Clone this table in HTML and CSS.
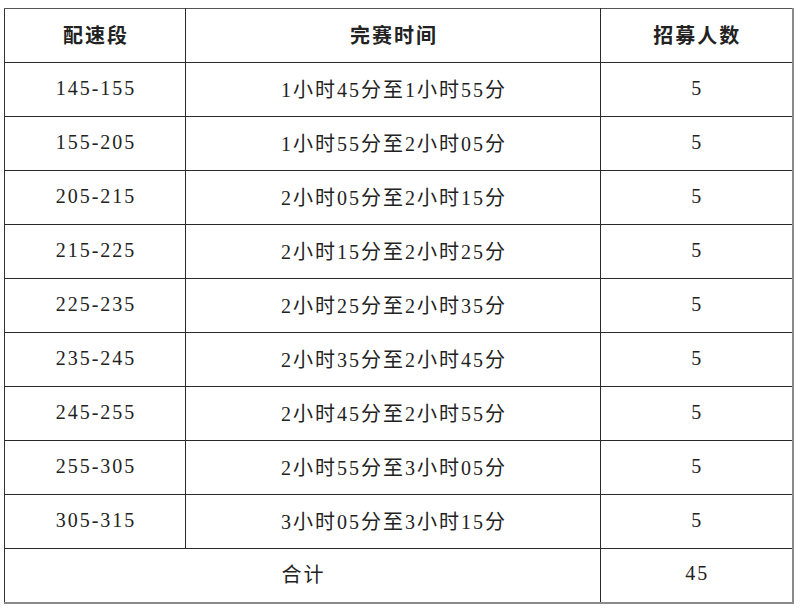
FILE: index.html
```html
<!DOCTYPE html>
<html lang="zh-CN">
<head>
<meta charset="utf-8">
<title>配速段</title>
<link rel="stylesheet" href="styles.css">
</head>
<body>
<div class="page">
<table class="pace">
<colgroup>
<col class="c1"><col class="c2"><col class="c3">
</colgroup>
<thead>
<tr><th>配速段</th><th>完赛时间</th><th>招募人数</th></tr>
</thead>
<tbody>
<tr><td>145-155</td><td>1小时45分至1小时55分</td><td>5</td></tr>
<tr><td>155-205</td><td>1小时55分至2小时05分</td><td>5</td></tr>
<tr><td>205-215</td><td>2小时05分至2小时15分</td><td>5</td></tr>
<tr><td>215-225</td><td>2小时15分至2小时25分</td><td>5</td></tr>
<tr><td>225-235</td><td>2小时25分至2小时35分</td><td>5</td></tr>
<tr><td>235-245</td><td>2小时35分至2小时45分</td><td>5</td></tr>
<tr><td>245-255</td><td>2小时45分至2小时55分</td><td>5</td></tr>
<tr><td>255-305</td><td>2小时55分至3小时05分</td><td>5</td></tr>
<tr><td>305-315</td><td>3小时05分至3小时15分</td><td>5</td></tr>
<tr class="total"><td colspan="2">合计</td><td>45</td></tr>
</tbody>
</table>
</div>
</body>
</html>
```
FILE: styles.css
```css
html, body {
  margin: 0;
  padding: 0;
  background: #ffffff;
}
.page {
  padding: 8px 0 0 4px;
}
.pace {
  border-collapse: collapse;
  table-layout: fixed;
  width: 788px;
  font-family: "Liberation Serif", "Noto Sans CJK SC", serif;
  font-size: 20px;
  color: #222222;
  border-top: 1px solid #555555;
  border-left: 1px solid #333333;
  border-right: 2px solid #8a8a8a;
  border-bottom: 2px solid #8a8a8a;
}
.c1 { width: 181px; }
.c2 { width: 415px; }
.c3 { width: 192px; }
.pace th,
.pace td {
  height: 54px;
  padding: 0 0 3px 2px;
  text-align: center;
  vertical-align: middle;
  letter-spacing: 2px;
  border: 1px solid #2a2a2a;
  box-sizing: border-box;
}
.pace th {
  font-family: "Noto Sans CJK SC", sans-serif;
  font-weight: 700;
}
.pace td {
  font-weight: 400;
}
.pace tr:first-child th { border-top: 1px solid #555555; }
.pace th:first-child, .pace td:first-child { border-left: 1px solid #333333; }
.pace th:last-child, .pace td:last-child { border-right: 2px solid #8a8a8a; }
.pace tr.total td { border-bottom: 2px solid #8a8a8a; }
```
